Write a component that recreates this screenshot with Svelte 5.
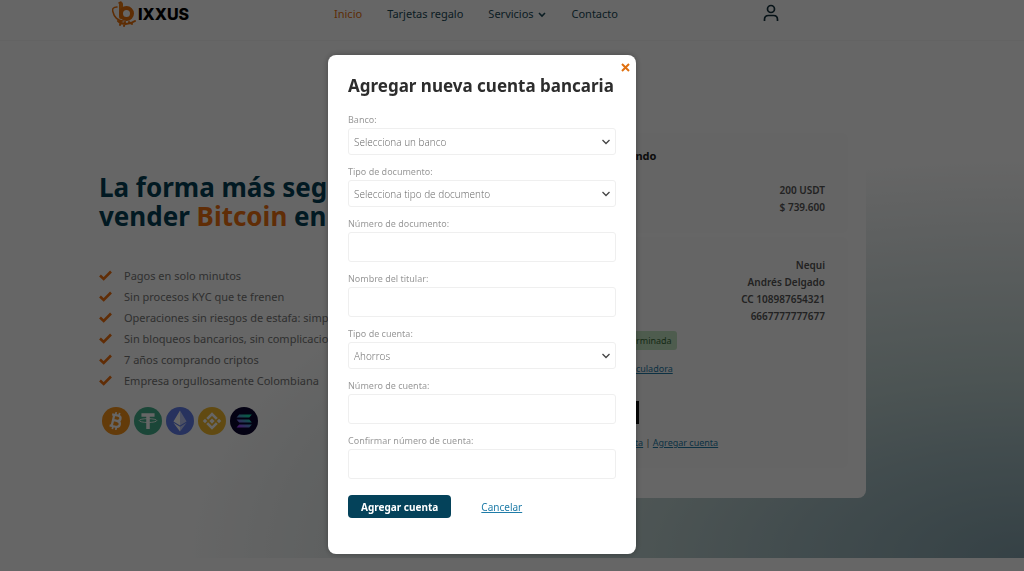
<script lang="ts">
    let account = $state({
        bank: "",
        documentType: "",
        documentNumber: "",
        holder: "",
        accountType: "ahorros",
        number: "",
        confirmNumber: ""
    });
    let open = $state(true);

    const benefits = [
        "Pagos en solo minutos",
        "Sin procesos KYC que te frenen",
        "Operaciones sin riesgos de estafa: simple",
        "Sin bloqueos bancarios, sin complicaciones",
        "7 años comprando criptos",
        "Empresa orgullosamente Colombiana"
    ];

    function submit(event: SubmitEvent) {
        event.preventDefault();
        open = false;
    }
</script>

<header class="site-header">
    <a class="logo" href="/" aria-label="Bixxus">
        <svg width="26" height="26" viewBox="0 0 26 26" fill="none">
            <path d="M9 3 V16" stroke="#f07d10" stroke-width="4" stroke-linecap="round" />
            <circle cx="14.500" cy="12.500" r="5.500" stroke="#e8700c" stroke-width="4" />
            <path d="M5 6 C1 6 0 8 1 11 C2 16 6 20 11 20 M7 2 L9 1" stroke="#e8700c" stroke-width="1.500" stroke-linecap="round" />
            <path d="M6 20 C10 24 17 24 23 20 M9 20 L8 24 M13 21 L12 25 M17 21 L20 23" stroke="#e8700c" stroke-width="2" stroke-linecap="round" />
        </svg>
        <span>IXXUS</span>
    </a>
    <nav>
        <a class="active" href="/">Inicio</a>
        <a href="/tarjetas">Tarjetas regalo</a>
        <a href="/servicios">
            Servicios
            <svg width="8" height="6" viewBox="0 0 8 6"><path d="M1 1 L4 4 L7 1" fill="none" stroke="currentColor" stroke-width="1.600" /></svg>
        </a>
        <a href="/contacto">Contacto</a>
    </nav>
    <a class="user" href="/perfil" aria-label="Mi cuenta">
        <svg width="16" height="18" viewBox="0 0 16 18" fill="none" stroke="currentColor" stroke-width="1.700">
            <circle cx="8" cy="5" r="3.500" />
            <path d="M1.500 17 V15.500 Q1.500 11.500 5.500 11.500 H10.500 Q14.500 11.500 14.500 15.500 V17" />
        </svg>
    </a>
</header>

<main class="hero">
    <section class="intro">
        <h1>La forma más segura de<br />vender <em>Bitcoin</em> en Colombia</h1>
        <ul class="benefits">
            {#each benefits as benefit}
                <li>
                    <svg width="13" height="11" viewBox="0 0 13 11"><path d="M1 5.500 L4.700 9 L12 1.500" fill="none" stroke="#f07010" stroke-width="2.600" /></svg>
                    {benefit}
                </li>
            {/each}
        </ul>
        <div class="coins">
            <svg viewBox="0 0 32 32">
                <circle cx="16" cy="16" r="16" fill="#f7931a" />
                <g transform="rotate(13 16 16)" fill="none" stroke="#fff" stroke-width="2.600">
                    <path d="M12.500 9 V23 M10 9.500 H17 C21.500 9.500 21.500 15.500 17 15.500 H12.500 M17 15.500 C22.500 15.500 22.500 22.500 17 22.500 H10" />
                    <path d="M14 6 V9 M18 6 V9 M14 23 V26 M18 23 V26" stroke-width="2" />
                </g>
            </svg>
            <svg viewBox="0 0 32 32">
                <circle cx="16" cy="16" r="16" fill="#45b08c" />
                <path d="M8.500 7 H23.500 V11 H18 V25 H14 V11 H8.500 Z" fill="#fff" />
                <ellipse cx="16" cy="15.500" rx="10" ry="2.200" fill="none" stroke="#fff" />
            </svg>
            <svg viewBox="0 0 32 32">
                <circle cx="16" cy="16" r="16" fill="#627eea" />
                <path d="M16 4 L8.500 16.500 L16 21 Z M16 22.500 L8.500 18 L16 28 Z" fill="#fff" />
                <path d="M16 4 L23.500 16.500 L16 21 Z M16 22.500 L23.500 18 L16 28 Z" fill="#c0cbf7" />
            </svg>
            <svg viewBox="0 0 32 32">
                <circle cx="16" cy="16" r="16" fill="#f3ba2f" />
                <path d="M10.500 13.500 L16 8 L21.500 13.500 M10.500 18.500 L16 24 L21.500 18.500" fill="none" stroke="#fff" stroke-width="3" />
                <path d="M16 13 L19 16 L16 19 L13 16 Z M8 13.500 L10.500 16 L8 18.500 L5.500 16 Z M24 13.500 L26.500 16 L24 18.500 L21.500 16 Z" fill="#fff" />
            </svg>
            <svg viewBox="0 0 32 32">
                <defs>
                    <linearGradient id="sol" x1="1" y1="0" x2="0" y2="1">
                        <stop offset="0.2" stop-color="#19e0b0" />
                        <stop offset="0.9" stop-color="#a040ff" />
                    </linearGradient>
                </defs>
                <circle cx="16" cy="16" r="16" fill="#0c0530" />
                <path d="M10.500 8.500 H25 L22 12 H7.500 Z M7.500 14.200 H22 L25 17.700 H10.500 Z M10.500 20 H25 L22 23.500 H7.500 Z" fill="url(#sol)" />
            </svg>
        </div>
    </section>

    <section class="order">
        <div class="panel">
            <h2>Vendiendo</h2>
            <p>200 USDT</p>
            <p>$ 739.600</p>
        </div>
        <div class="panel payout">
            <p>Nequi</p>
            <p>Andrés Delgado</p>
            <p>CC 108987654321</p>
            <p>6667777777677</p>
            <span class="badge">Predeterminada</span>
            <a class="back" href="/calculadora">Ir a la calculadora</a>
            <button class="sell" type="button" aria-label="Vender"></button>
            <div class="links"><a href="/cuentas">Ver cuenta</a> | <a href="/cuentas/nueva">Agregar cuenta</a></div>
        </div>
    </section>
</main>

{#if open}
    <div class="overlay">
        <div class="modal" role="dialog" aria-modal="true" aria-labelledby="modal-title">
            <button class="close" type="button" aria-label="Cerrar" onclick={() => (open = false)}>
                <svg width="9" height="9" viewBox="0 0 9 9"><path d="M1 1 L8 8 M8 1 L1 8" stroke="currentColor" stroke-width="2" /></svg>
            </button>
            <h2 id="modal-title">Agregar nueva cuenta bancaria</h2>
            <form onsubmit={submit}>
                <div class="field">
                    <label for="bank">Banco:</label>
                    <select id="bank" bind:value={account.bank}>
                        <option value="">Selecciona un banco</option>
                    </select>
                </div>
                <div class="field">
                    <label for="document-type">Tipo de documento:</label>
                    <select id="document-type" bind:value={account.documentType}>
                        <option value="">Selecciona tipo de documento</option>
                    </select>
                </div>
                <div class="field">
                    <label for="document-number">Número de documento:</label>
                    <input id="document-number" type="text" bind:value={account.documentNumber} />
                </div>
                <div class="field">
                    <label for="holder">Nombre del titular:</label>
                    <input id="holder" type="text" bind:value={account.holder} />
                </div>
                <div class="field">
                    <label for="account-type">Tipo de cuenta:</label>
                    <select id="account-type" bind:value={account.accountType}>
                        <option value="ahorros">Ahorros</option>
                        <option value="corriente">Corriente</option>
                    </select>
                </div>
                <div class="field">
                    <label for="number">Número de cuenta:</label>
                    <input id="number" type="text" bind:value={account.number} />
                </div>
                <div class="field">
                    <label for="confirm-number">Confirmar número de cuenta:</label>
                    <input id="confirm-number" type="text" bind:value={account.confirmNumber} />
                </div>
                <div class="actions">
                    <button class="submit" type="submit">Agregar cuenta</button>
                    <a href="/cuentas">Cancelar</a>
                </div>
            </form>
        </div>
    </div>
{/if}

<style>
    :global(body) {
        margin: 0;
        background: #fff;
        font-family: "Noto Sans", sans-serif;
        font-size: 10px;
        color: #555;
        overflow: hidden;
    }

    h1, h2, p, ul {
        margin: 0;
        padding: 0;
    }

    a {
        color: #1f7ca8;
    }

    .site-header {
        display: flex;
        align-items: center;
        height: 28px;
        padding: 0 245px 12px 112px;
        border-bottom: 1px solid #f8f8f8;
    }

    .logo {
        display: flex;
        align-items: center;
        width: 222px;
        font: 800 16px/28px Inter, sans-serif;
        color: #000;
        text-decoration: none;
    }

    nav {
        display: flex;
        gap: 25px;
        font-size: 11px;
    }

    nav a {
        color: #1c4a58;
        line-height: 16px;
        text-decoration: none;
    }

    nav svg {
        margin-left: 2px;
    }

    nav .active {
        color: #e8700c;
    }

    .user {
        margin-left: auto;
        height: 20px;
        color: #12303c;
    }

    .hero {
        display: flex;
        justify-content: space-between;
        padding: 72px 158px 60px 99px;
        background: radial-gradient(ellipse 840px 400px at 100% 100%, #85a3ad 0%, #a5bec3 27%, #bed2d1 45%, #e8eeee 80%, #fff 100%);
    }

    .intro {
        width: 400px;
        padding-top: 60px;
        white-space: nowrap;
    }

    h1 {
        font-size: 26px;
        line-height: 29px;
        color: #043f56;
    }

    h1 em {
        font-style: normal;
        color: #f07010;
    }

    .benefits {
        padding-top: 34px;
        list-style: none;
        font-size: 11px;
        line-height: 21px;
        color: #777;
    }

    .benefits li {
        display: flex;
        align-items: center;
        gap: 12px;
    }

    .coins {
        display: flex;
        gap: 4px;
        padding: 16px 3px;
    }

    .coins svg {
        width: 28px;
        height: 28px;
    }

    .order {
        box-sizing: border-box;
        width: 308px;
        padding: 20px 18px 30px;
        background: #fff;
        border-radius: 8px;
    }

    .panel {
        padding: 14px 23px 17px 22px;
        background: #fcfcfc;
        border-radius: 6px;
        text-align: right;
        font-weight: 600;
        line-height: 17px;
    }

    .panel h2 {
        margin-bottom: 17px;
        text-align: left;
        font-size: 11px;
        line-height: 18px;
        color: #222;
    }

    .payout {
        display: flex;
        flex-direction: column;
        margin-top: 4px;
        padding-top: 20px;
    }

    .badge {
        align-self: flex-start;
        margin-top: 6px;
        padding: 1px 5px;
        border-radius: 3px;
        background: #c3e6c3;
        color: #386b38;
        font-size: 9px;
        font-weight: 400;
    }

    .back, .links {
        align-self: flex-start;
        font-size: 9px;
        font-weight: 400;
    }

    .back {
        margin-top: 10px;
    }

    .sell {
        width: 41px;
        height: 23px;
        margin: 24px 0 10px;
        border: 0;
        background: #111;
    }

    .overlay {
        position: fixed;
        inset: 0;
        display: flex;
        justify-content: center;
        align-items: flex-start;
        padding: 55px 60px 0 0;
        background: rgba(0, 0, 0, 0.6);
    }

    .modal {
        position: relative;
        box-sizing: border-box;
        width: 308px;
        padding: 19px 20px 36px;
        background: #fff;
        border-radius: 8px;
        box-shadow: 0 0 6px rgba(0, 0, 0, 0.3);
    }

    .modal h2 {
        font-size: 17px;
        line-height: 24px;
        color: #2d2d2d;
        white-space: nowrap;
    }

    .close {
        position: absolute;
        top: 8px;
        right: 6px;
        display: flex;
        padding: 0;
        border: 0;
        background: none;
        color: #e0700f;
    }

    form {
        display: flex;
        flex-direction: column;
        gap: 9px;
        padding-top: 14px;
    }

    .field {
        display: flex;
        flex-direction: column;
    }

    label {
        font-size: 9px;
        line-height: 16px;
        color: #999;
    }

    input, select {
        box-sizing: border-box;
        width: 100%;
        height: 30px;
        padding: 0 5px;
        border: 1px solid #efefef;
        border-radius: 3px;
        background: #fff;
        color: #666;
        font-family: "Open Sans", sans-serif;
        font-size: 10px;
        font-weight: 300;
    }

    select {
        height: 27px;
        appearance: none;
        background: #fff url("data:image/svg+xml,%3Csvg xmlns='http://www.w3.org/2000/svg' width='8' height='6'%3E%3Cpath d='M.5 1 4 4.500 7.500 1' fill='none' stroke='%23444' stroke-width='1.300'/%3E%3C/svg%3E") no-repeat right 5px center;
    }

    .actions {
        display: flex;
        align-items: center;
        gap: 30px;
        padding-top: 7px;
    }

    .submit {
        height: 23px;
        padding: 0 13px;
        border: 0;
        border-radius: 4px;
        background: #04425a;
        color: #fff;
        font: 700 10px "Noto Sans", sans-serif;
    }
</style>
